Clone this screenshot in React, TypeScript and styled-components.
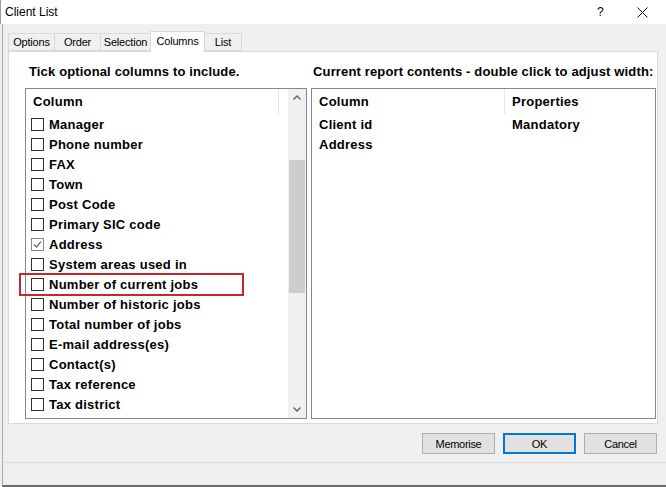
import { createGlobalStyle } from 'styled-components';
import styled from 'styled-components';

const GlobalStyle = createGlobalStyle`
  html, body {
    margin: 0;
    padding: 0;
    background: #f0f0f0;
  }
  * {
    box-sizing: border-box;
  }
`;

const optionalColumns = [
  { label: 'Manager', checked: false },
  { label: 'Phone number', checked: false },
  { label: 'FAX', checked: false },
  { label: 'Town', checked: false },
  { label: 'Post Code', checked: false },
  { label: 'Primary SIC code', checked: false },
  { label: 'Address', checked: true },
  { label: 'System areas used in', checked: false },
  { label: 'Number of current jobs', checked: false },
  { label: 'Number of historic jobs', checked: false },
  { label: 'Total number of jobs', checked: false },
  { label: 'E-mail address(es)', checked: false },
  { label: 'Contact(s)', checked: false },
  { label: 'Tax reference', checked: false },
  { label: 'Tax district', checked: false },
  // next row is scrolled below the edge, only its box top shows
  { label: '', checked: false },
];

const reportColumns = [
  { column: 'Client id', properties: 'Mandatory' },
  { column: 'Address', properties: '' },
];

const tabs = ['Options', 'Order', 'Selection', 'Columns', 'List'];
const tabWidths = [47, 47, 51, 55, 38];

export default function App(): JSX.Element {
  return (
    <>
      <GlobalStyle />
      <Window>
        <TitleBar>
          <Title>Client List</Title>
          <TitleButtons>
            <HelpGlyph>?</HelpGlyph>
            <CloseGlyph width="11" height="11" viewBox="0 0 11 11">
              <path d="M0.5 0.5 L10.5 10.5 M10.5 0.5 L0.5 10.5" stroke="#111" strokeWidth="1" />
            </CloseGlyph>
          </TitleButtons>
        </TitleBar>

        <Body>
          <TabStrip>
            {tabs.map((tab, idx) => (
              <Tab key={tab} $active={tab === 'Columns'} style={{ width: tabWidths[idx] }}>
                {tab}
              </Tab>
            ))}
          </TabStrip>

          <Panel>
            <Headings>
              <Heading $indent={4}>Tick optional columns to include.</Heading>
              <Heading $indent={2}>Current report contents - double click to adjust width:</Heading>
            </Headings>

            <Lists>
              <ListBox>
                <ListContent>
                  <ListHeader>
                    <HeaderCell $width={253}>Column</HeaderCell>
                  </ListHeader>
                  {optionalColumns.map((item, idx) => (
                    <CheckRow key={idx}>
                      <CheckBox $checked={item.checked}>
                        {item.checked && (
                          <svg width="11" height="11" viewBox="0 0 11 11">
                            <path d="M2 5.5 L4.5 8 L9 2.5" fill="none" stroke="#6a6a6a" strokeWidth="1.2" />
                          </svg>
                        )}
                      </CheckBox>
                      {item.label && <RowText>{item.label}</RowText>}
                    </CheckRow>
                  ))}
                </ListContent>
                <ScrollBar>
                  <ScrollArrow>
                    <svg width="8" height="5" viewBox="0 0 8 5">
                      <path d="M0.5 4.5 L4 1 L7.5 4.5" fill="none" stroke="#606060" strokeWidth="1.3" />
                    </svg>
                  </ScrollArrow>
                  <ScrollTrack>
                    <ScrollThumb />
                  </ScrollTrack>
                  <ScrollArrow>
                    <svg width="8" height="5" viewBox="0 0 8 5">
                      <path d="M0.5 0.5 L4 4 L7.5 0.5" fill="none" stroke="#606060" strokeWidth="1.3" />
                    </svg>
                  </ScrollArrow>
                </ScrollBar>
              </ListBox>

              <ListBox>
                <ListContent>
                  <ListHeader>
                    <HeaderCell $width={193}>Column</HeaderCell>
                    <HeaderCell $width={140} $last>Properties</HeaderCell>
                  </ListHeader>
                  {reportColumns.map((row) => (
                    <ReportRow key={row.column}>
                      <ReportCell $width={193}>{row.column}</ReportCell>
                      <ReportCell $width={140}>{row.properties}</ReportCell>
                    </ReportRow>
                  ))}
                </ListContent>
              </ListBox>
            </Lists>

            <Highlight />
          </Panel>

          <ButtonRow>
            <DialogButton>Memorise</DialogButton>
            <DialogButton $default>OK</DialogButton>
            <DialogButton>Cancel</DialogButton>
          </ButtonRow>
        </Body>

        <StatusStrip />
      </Window>
    </>
  );
}

const Window = styled.div`
  width: 666px;
  height: 487px;
  display: flex;
  flex-direction: column;
  background: #f0f0f0;
  overflow: hidden;
  font-family: 'Liberation Sans', Arial, sans-serif;
  color: #000;
`;

const TitleBar = styled.div`
  height: 24px;
  flex: none;
  display: flex;
  align-items: center;
  justify-content: space-between;
  background: #fff;
  padding-left: 4px;
  border-left: 1px solid #9a9a9a;
`;

const Title = styled.div`
  font-size: 12px;
  color: #000;
`;

const TitleButtons = styled.div`
  display: flex;
  align-items: center;
  padding-right: 18px;
`;

const HelpGlyph = styled.span`
  font-size: 12px;
  width: 10px;
  margin-right: 30px;
`;

const CloseGlyph = styled.svg`
  display: block;
`;

const Body = styled.div`
  flex: 1;
  display: flex;
  flex-direction: column;
  margin-left: 2px;
  padding: 0 8px 0 5px;
  border-left: 1px solid #a8a8a8;
`;

const TabStrip = styled.div`
  height: 27px;
  flex: none;
  display: flex;
  align-items: flex-end;
  padding-left: 1px;
  position: relative;
  z-index: 1;
`;

const Tab = styled.div<{ $active?: boolean }>`
  height: ${(p) => (p.$active ? 21 : 18)}px;
  display: flex;
  align-items: center;
  justify-content: center;
  padding-bottom: ${(p) => (p.$active ? 3 : 0)}px;
  margin-bottom: ${(p) => (p.$active ? -1 : 0)}px;
  font-size: 11px;
  letter-spacing: -0.2px;
  color: #000;
  background: ${(p) => (p.$active ? '#fff' : '#f0f0f0')};
  border: 1px solid #d9d9d9;
  border-bottom: ${(p) => (p.$active ? 'none' : '1px solid #d9d9d9')};
  margin-left: -1px;
`;

const Panel = styled.div`
  position: relative;
  height: 373px;
  flex: none;
  background: #fff;
  border: 1px solid #d9d9d9;
  padding: 12px 2px 4px 16px;
  display: flex;
  flex-direction: column;
`;

const Headings = styled.div`
  display: grid;
  grid-template-columns: 282px 1fr;
  column-gap: 4px;
  height: 16px;
  margin-bottom: 8px;
`;

const Heading = styled.div<{ $indent: number }>`
  padding-left: ${(p) => p.$indent}px;
  font-size: 13px;
  font-weight: bold;
  letter-spacing: 0.15px;
  line-height: 16px;
  white-space: nowrap;
`;

const Lists = styled.div`
  display: grid;
  grid-template-columns: 282px 345px;
  column-gap: 4px;
  height: 331px;
`;

const ListBox = styled.div`
  display: flex;
  border: 1px solid #828790;
  background: #fff;
  overflow: hidden;
`;

const ListContent = styled.div`
  flex: 1;
  overflow: hidden;
`;

const ListHeader = styled.div`
  display: flex;
  height: 25px;
`;

const HeaderCell = styled.div<{ $width: number; $last?: boolean }>`
  width: ${(p) => p.$width}px;
  flex: none;
  display: flex;
  align-items: center;
  padding: 0 0 1px 7px;
  border-right: ${(p) => (p.$last ? 'none' : '1px solid #e5e5e5')};
  font-size: 13px;
  font-weight: bold;
  letter-spacing: 0.25px;
  white-space: nowrap;
`;

const CheckRow = styled.div`
  height: 20px;
  display: flex;
  align-items: center;
  padding-left: 5px;
  gap: 5px;
`;

const CheckBox = styled.div<{ $checked?: boolean }>`
  width: 13px;
  height: 13px;
  flex: none;
  display: flex;
  align-items: center;
  justify-content: center;
  border: 1px solid ${(p) => (p.$checked ? '#8a8a8a' : '#333')};
  background: #fff;
`;

const RowText = styled.span`
  font-size: 13px;
  font-weight: bold;
  letter-spacing: 0.25px;
  white-space: nowrap;
`;

const ReportRow = styled.div`
  height: 20px;
  display: flex;
  align-items: center;
`;

const ReportCell = styled.div<{ $width: number }>`
  width: ${(p) => p.$width}px;
  flex: none;
  padding-left: 7px;
  font-size: 13px;
  font-weight: bold;
  letter-spacing: 0.25px;
  white-space: nowrap;
`;

const ScrollBar = styled.div`
  width: 18px;
  flex: none;
  display: flex;
  flex-direction: column;
  background: #f0f0f0;
`;

const ScrollArrow = styled.div`
  height: 17px;
  flex: none;
  display: flex;
  align-items: center;
  justify-content: center;
`;

const ScrollTrack = styled.div`
  flex: 1;
  display: flex;
  flex-direction: column;
  padding: 54px 1px 0;
`;

const ScrollThumb = styled.div`
  height: 133px;
  background: #cdcdcd;
`;

const Highlight = styled.div`
  position: absolute;
  left: 10px;
  top: 221px;
  width: 225px;
  height: 23px;
  border: 2px solid #c8262f;
  pointer-events: none;
`;

const ButtonRow = styled.div`
  height: 38px;
  flex: none;
  display: flex;
  justify-content: flex-end;
  align-items: flex-start;
  gap: 8px;
  padding: 9px 1px 0 0;
`;

const DialogButton = styled.button<{ $default?: boolean }>`
  width: 73px;
  height: 21px;
  padding: 0;
  font-family: 'Liberation Sans', Arial, sans-serif;
  font-size: 11px;
  letter-spacing: -0.3px;
  color: #000;
  background: #e1e1e1;
  border: 1px solid ${(p) => (p.$default ? '#0078d7' : '#adadad')};
  box-shadow: ${(p) => (p.$default ? 'inset 0 0 0 1px #0078d7' : 'none')};
  border-radius: 0;
`;

const StatusStrip = styled.div`
  height: 25px;
  flex: none;
  margin-left: 2px;
  border-left: 1px solid #a8a8a8;
  border-top: 1px solid #dadada;
  border-bottom: 2px solid #6a6a6a;
  background: #f0f0f0;
`;
